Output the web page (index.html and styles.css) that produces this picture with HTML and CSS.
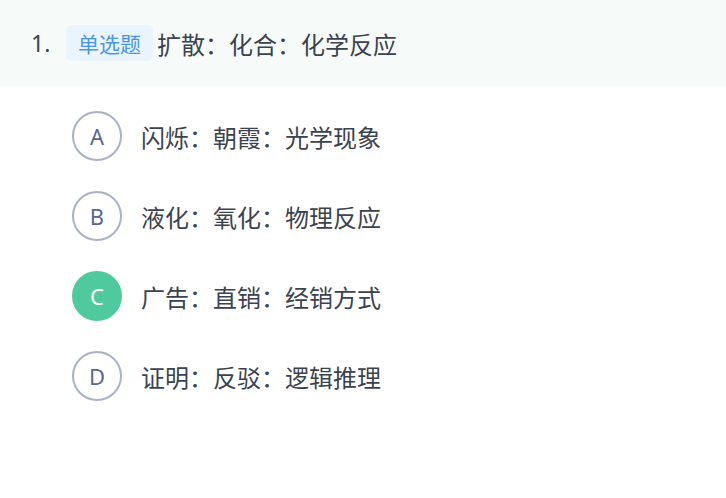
FILE: index.html
```html
<!DOCTYPE html>
<html lang="zh">

<head>
    <meta charset="UTF-8">
    <title>单选题</title>
    <link rel="stylesheet" href="styles.css">
</head>

<body>
    <div class="question">
        <div class="title">
            <span class="num">1.</span>
            <span class="tag">单选题</span>
            <span class="stem">扩散：化合：化学反应</span>
        </div>
        <div class="options">
            <div class="option">
                <span class="letter">A</span>
                <span class="text">闪烁：朝霞：光学现象</span>
            </div>
            <div class="option">
                <span class="letter">B</span>
                <span class="text">液化：氧化：物理反应</span>
            </div>
            <div class="option selected">
                <span class="letter">C</span>
                <span class="text">广告：直销：经销方式</span>
            </div>
            <div class="option">
                <span class="letter">D</span>
                <span class="text">证明：反驳：逻辑推理</span>
            </div>
        </div>
    </div>
</body>

</html>
```

FILE: styles.css
```css
body {
    margin: 0;
    background: #fff;
    font-family: "Noto Sans CJK SC", "Noto Sans", sans-serif;
    color: #3c4350;
}

.title {
    height: 86px;
    background: #f6fbfa;
    display: flex;
    align-items: center;
    padding-left: 31px;
    font-size: 24px;
}

.num {
    width: 35px;
    font-family: "Noto Sans", sans-serif;
    font-size: 23px;
}

.tag {
    height: 36px;
    padding: 0 12px;
    margin-right: 4px;
    display: flex;
    align-items: center;
    font-size: 21px;
    color: #4a95e8;
    background: #eaf4fc;
    border-radius: 6px;
}

.options {
    padding: 25px 0 0 72px;
    display: flex;
    flex-direction: column;
    gap: 30px;
}

.option {
    display: flex;
    align-items: center;
    height: 50px;
}

.letter {
    width: 46px;
    height: 46px;
    border: 2px solid #aab0c8;
    border-radius: 50%;
    display: flex;
    align-items: center;
    justify-content: center;
    font-family: "Noto Sans", sans-serif;
    font-size: 22px;
    color: #5b6590;
    margin-right: 19px;
}

.selected .letter {
    background: #4fca9e;
    border-color: #4fca9e;
    color: #fff;
}

.text {
    font-size: 24px;
}
```
